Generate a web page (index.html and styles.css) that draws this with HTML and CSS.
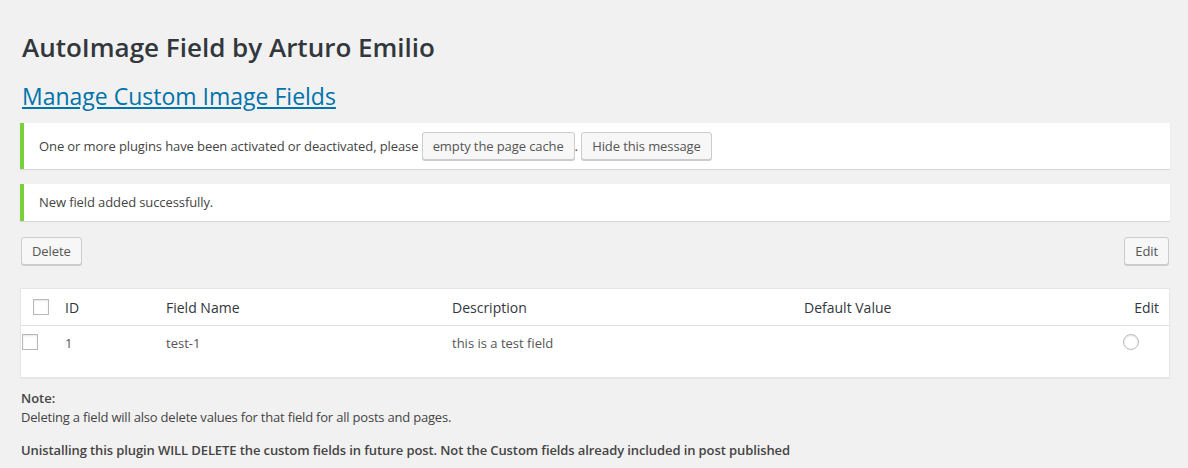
FILE: index.html
```html
<!DOCTYPE html>
<html>
<head>
<meta charset="utf-8">
<link rel="stylesheet" href="styles.css">
</head>
<body>
<div class="wrap">
  <h1 class="title">AutoImage Field by Arturo Emilio</h1>
  <h2 class="subtitle"><a href="#">Manage Custom Image Fields</a></h2>

  <div class="notice notice-tall">
    <p>One or more plugins have been activated or deactivated, please <button class="button">empty the page cache</button>. <button class="button">Hide this message</button></p>
  </div>

  <div class="notice">
    <p>New field added successfully.</p>
  </div>

  <div class="actions">
    <button class="button">Delete</button>
    <button class="button">Edit</button>
  </div>

  <table class="fields">
    <thead>
      <tr>
        <th class="col-check"><span class="checkbox head-check"></span></th>
        <th class="col-id">ID</th>
        <th class="col-name">Field Name</th>
        <th class="col-desc">Description</th>
        <th class="col-default">Default Value</th>
        <th class="col-edit">Edit</th>
      </tr>
    </thead>
    <tbody>
      <tr>
        <td class="col-check"><span class="checkbox row-check"></span></td>
        <td class="col-id">1</td>
        <td class="col-name">test-1</td>
        <td class="col-desc">this is a test field</td>
        <td class="col-default"></td>
        <td class="col-edit"><span class="radio"></span></td>
      </tr>
    </tbody>
  </table>

  <div class="note">
    <p class="note-title">Note:</p>
    <p class="note-text">Deleting a field will also delete values for that field for all posts and pages.</p>
    <p class="note-warn">Unistalling this plugin WILL DELETE the custom fields in future post. Not the Custom fields already included in post published</p>
  </div>
</div>
</body>
</html>
```

FILE: styles.css
```css
html, body {
  margin: 0;
  padding: 0;
  background: #f1f1f1;
}
body {
  font-family: "Open Sans", "Liberation Sans", sans-serif;
  font-size: 13px;
  color: #444;
  line-height: 1.4em;
}
.wrap {
  padding: 0 18px 0 20px;
}
.title {
  margin: 0;
  padding: 30px 0 0 2px;
  font-size: 26px;
  font-weight: 600;
  line-height: 34px;
  color: #32373c;
}
.subtitle {
  margin: 0;
  padding: 17px 0 0 2px;
  font-size: 23px;
  font-weight: 400;
  line-height: 30px;
}
.subtitle a {
  color: #0073aa;
  text-decoration: underline;
}
.notice {
  background: #fff;
  border-left: 4px solid #7ad03a;
  box-shadow: 0 1px 1px 0 rgba(0,0,0,0.1);
  padding: 0 13px 0 15px;
  margin-bottom: 15px;
}
.notice-tall {
  margin-top: 12px;
}
.notice p {
  margin: 0;
  padding: 9px 0 10px;
  line-height: 18px;
  letter-spacing: -0.1px;
}
.notice-tall p {
  padding: 9px 0 9px;
  line-height: 28px;
}
.button {
  display: inline-block;
  font-family: inherit;
  font-size: 13px;
  line-height: 26px;
  height: 28px;
  padding: 0 10px 1px;
  margin: 0;
  background: #f7f7f7;
  border: 1px solid #ccc;
  border-radius: 3px;
  box-shadow: 0 1px 0 #ccc;
  color: #555;
  vertical-align: top;
  box-sizing: border-box;
  letter-spacing: -0.1px;
}
.actions {
  display: flex;
  justify-content: space-between;
  padding: 1px 1px 0 1px;
  margin-bottom: 23px;
}
.fields {
  width: 100%;
  border-collapse: collapse;
  background: #fff;
  border: 1px solid #e5e5e5;
  box-shadow: 0 1px 1px rgba(0,0,0,0.04);
  table-layout: fixed;
}
.fields th {
  font-weight: 400;
  font-size: 14px;
  color: #32373c;
  text-align: left;
  padding: 9px 10px 8px;
  height: 19px;
  border-bottom: 1px solid #e1e1e1;
  line-height: 19px;
}
.fields td {
  color: #555;
  font-size: 13px;
  padding: 8px 10px 23px;
  line-height: 18px;
  vertical-align: top;
}
.fields .col-check { width: 24px; padding-left: 0; padding-right: 10px; }
.fields .col-id { width: 81px; }
.fields .col-name { width: 266px; }
.fields .col-desc { width: 332px; }
.fields .col-default { width: auto; }
.fields .col-edit { width: 50px; text-align: right; }
.checkbox {
  display: block;
  width: 14px;
  height: 14px;
  border: 1px solid #b4b9be;
  background: #fff;
  box-shadow: inset 0 1px 2px rgba(0,0,0,0.1);
}
.head-check {
  margin-left: 12px;
  margin-top: -1px;
}
.row-check {
  margin-left: 1px;
}
.radio {
  display: inline-block;
  width: 14px;
  height: 14px;
  border: 1px solid #b4b9be;
  border-radius: 50%;
  box-shadow: inset 0 1px 2px rgba(0,0,0,0.1);
  margin-right: 20px;
}
.note {
  padding-top: 11px;
  padding-left: 1px;
}
.note p {
  margin: 0;
  line-height: 19px;
}
.note-title {
  font-weight: 600;
}
.note-text {
  letter-spacing: -0.2px;
}
.note-warn {
  font-weight: 600;
  letter-spacing: -0.1px;
  margin-top: 14px !important;
}
```
